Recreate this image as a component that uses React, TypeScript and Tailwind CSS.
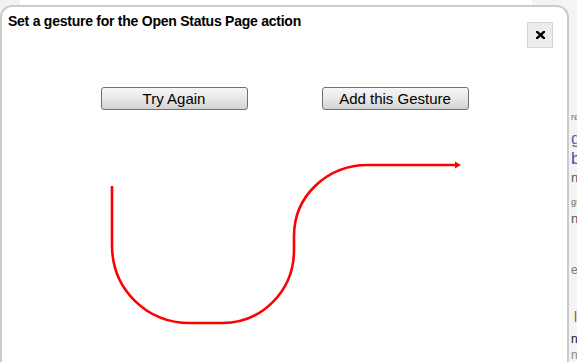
import React from "react";

const font = { fontFamily: '"Liberation Sans", Arial, sans-serif' };

function Frag({ text, cls }: { text: string; cls: string }) {
  return <div className={`whitespace-nowrap leading-none ${cls}`}>{text}</div>;
}

export default function App() {
  return (
    <div className="relative w-[577px] h-[362px] overflow-hidden bg-white" style={font}>
      {/* page behind the dialog */}
      <div className="flex h-full">
        <div className="w-[20px] bg-[#f2f2f2]" />
        <div className="flex-1 bg-white" />
        <div className="w-[45px] bg-[#f4f4f4] flex flex-col pl-[39px] overflow-hidden">
          <Frag text="re" cls="mt-[113px] text-[9px] text-[#666]" />
          <Frag text="g" cls="mt-[8px] text-[17px] text-[#4a6aa5]" />
          <Frag text="b" cls="mt-[3px] text-[17px] text-[#3b5a9a]" />
          <Frag text="ne" cls="mt-[4px] text-[13px] text-[#555]" />
          <Frag text="gs" cls="mt-[14px] text-[9px] text-[#666]" />
          <Frag text="ne" cls="mt-[5px] text-[13px] text-[#555]" />
          <Frag text="ew" cls="mt-[39px] text-[12px] text-[#777]" />
          <div className="mt-[34px] flex items-center gap-[3px] whitespace-nowrap leading-none">
            <span className="w-[1px] h-[6px] bg-[#3b82c4]" />
            <span className="text-[14px] text-[#a0522d]">l</span>
          </div>
          <Frag text="ni" cls="mt-[9px] text-[12px] text-[#111]" />
          <Frag text="ne" cls="mt-[4px] text-[12px] text-[#888]" />
        </div>
      </div>

      {/* dialog */}
      <div className="absolute left-0 top-[5px] w-[569px] h-[420px] rounded-t-[12px] border-2 border-[#cbcbcb] bg-white flex flex-col">
        <div className="flex justify-between items-start">
          <div className="mt-[6px] ml-[6px] text-[14px] leading-[16px] font-bold text-black tracking-[-0.25px]">
            Set a gesture for the Open Status Page action
          </div>
          <button className="mt-[15px] mr-[14px] w-[26px] h-[26px] flex items-center justify-center bg-[#ececec] border border-[#d6d6d6]">
            <svg width="9" height="8" viewBox="0 0 9 8">
              <path d="M1 0.8 L8 7.2 M8 0.8 L1 7.2" stroke="#000" strokeWidth="2.4" strokeLinecap="square" />
            </svg>
          </button>
        </div>

        <div className="mt-[39px] flex justify-center gap-[74px]">
          <button className="w-[147px] h-[23px] rounded-[3px] border border-[#707070] bg-linear-to-b from-[#f7f7f7] via-[#e8e8e8] to-[#d2d2d2] text-[15px] leading-none text-black">
            Try Again
          </button>
          <button className="w-[147px] h-[23px] rounded-[3px] border border-[#707070] bg-linear-to-b from-[#f7f7f7] via-[#e8e8e8] to-[#d2d2d2] text-[15px] leading-none text-black">
            Add this Gesture
          </button>
        </div>

        <svg className="mt-[2px] block" width="565" height="250" viewBox="2 112 565 250">
          <path
            d="M112 186 L112 245 C112 290 147 323 190 323 L222 323 C262 323 294 291 294 250 L294 236 C294 196 327 165 368 165 L456 165"
            fill="none"
            stroke="#ff0000"
            strokeWidth="2.6"
          />
          <path d="M455 161.5 L461 165 L455 168.5 Z" fill="#ff0000" />
        </svg>
      </div>
    </div>
  );
}
